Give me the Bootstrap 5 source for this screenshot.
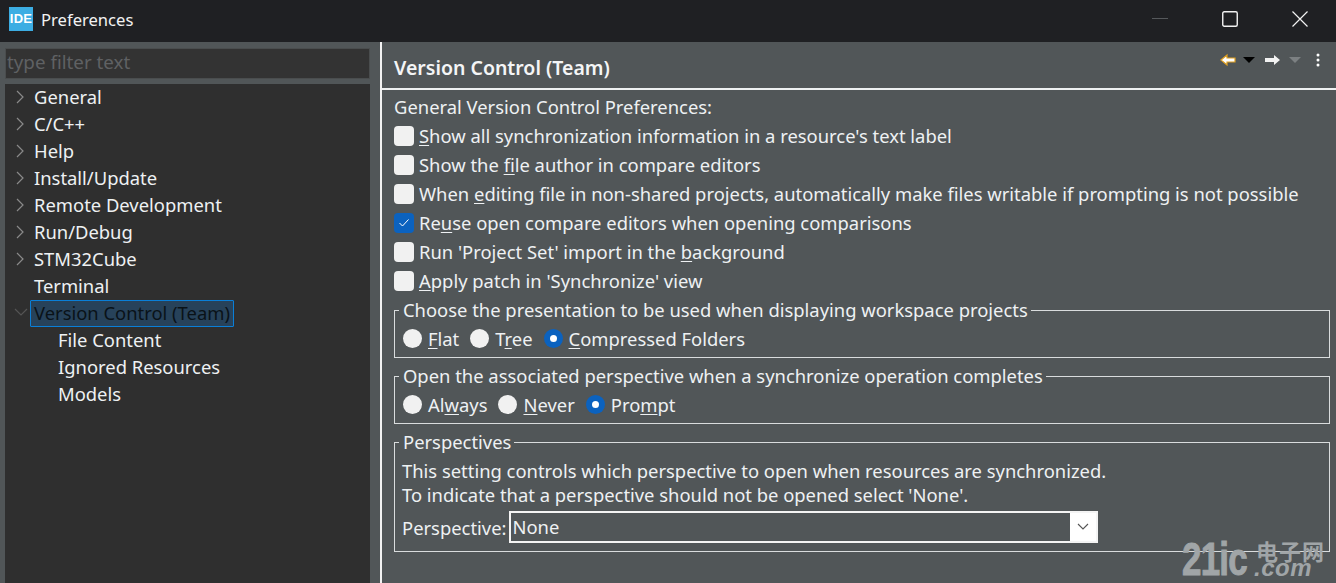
<!DOCTYPE html>
<html lang="en">
<head>
<meta charset="utf-8">
<title>Preferences</title>
<link rel="stylesheet" href="https://cdn.jsdelivr.net/npm/bootstrap@5.3.0/dist/css/bootstrap.min.css">
<style>
html,body{height:583px;overflow:hidden;background:#515658;}
body{font-family:"Noto Sans","Open Sans",sans-serif;font-size:18.4px;line-height:25px;color:#eef1f3;position:relative;}
u{text-underline-offset:2px;text-decoration-thickness:1px;}
.titlebar{height:42px;background:#1f2023;padding:0 0 4px 9px;gap:8px;}
.logo-box{width:24px;height:24px;background:#3cade3;color:#fff;font:bold 13px/24px "Liberation Sans",sans-serif;text-align:center;letter-spacing:.2px;}
.title-text{font-size:16.6px;color:#f2f2f2;}
.winbtns{margin-left:auto;margin-right:1px;}
.winbtn{width:70px;height:38px;}
.mainrow{height:541px;}
.leftpane{width:381px;padding:7px 10px 0 5px;flex:none;border-right:1px solid transparent;}
.filterbox{height:31px;background:#333;border:1px solid #4a4d4e;color:#5f6163;padding:0 1px;line-height:26px;font-size:18.8px;margin-top:-1px;}
.treebox{background:#2f2f2f;margin-top:5px;height:499px;color:#eef1f3;}
.treerow{height:27px;line-height:25px;position:relative;padding-left:29px;white-space:nowrap;}
.treerow.lvl2{padding-left:53px;}
.treerow svg{position:absolute;left:9px;top:6px;}
.sel-label{display:inline-block;background:#27425a;border:1px solid #0a7fd8;border-radius:1px;color:#0a1218;line-height:23px;height:27px;padding:0 3px;margin-left:-4px;vertical-align:top;}
.vline{width:2px;background:#f2f2f2;flex:none;margin-left:-1px;}
.rightpane{flex:1;min-width:0;}
.headbar{height:48px;border-bottom:2px solid #eef0f1;position:relative;padding:13px 0 0 12px;font-weight:600;font-size:19.5px;line-height:26px;color:#f4f5f6;}
.toolicons{position:absolute;right:16px;top:11px;gap:0;}
.prefbody{padding:4px 6px 0 12px;}
.checkrow{height:29px;gap:5px;white-space:nowrap;}
.ckbox{width:20px;height:20px;background:#f1f1f1;border-radius:4px;flex:none;}
.ckbox.onbox{background:#0b62bf;}
.groupframe{border:1px solid #d9dcdd;margin:0;padding:0 8px;position:relative;}
.group-one{height:48px;margin-top:15px;}
.group-two{height:48px;margin-top:18px;}
.group-three{height:110px;margin-top:18px;padding-left:7px;}
.grouptitle{position:absolute;left:4px;top:-14px;background:#515658;padding:0 3px 0 4px;line-height:25px;height:25px;white-space:nowrap;}
.radiorow{padding-top:15px;gap:10px;white-space:nowrap;}
.radiowrap{gap:6px;margin-right:1px;}
.rdo{width:19px;height:19px;border-radius:50%;background:#f1f1f1;flex:none;}
.rdo.ondot{background:#0b62bf;position:relative;}
.rdo.ondot::after{content:"";position:absolute;left:6px;top:6px;width:7px;height:7px;border-radius:50%;background:#fff;}
.textlines{padding-top:16px;line-height:24px;white-space:nowrap;}
.persprow{margin-top:4px;gap:3px;}
.comboshell{width:589px;height:32px;border:2px solid #f4f4f4;display:flex;background:#515658;}
.combotext{flex:1;padding-left:1px;line-height:28px;}
.comboarrow{width:26px;background:#fff;display:flex;align-items:center;justify-content:center;}
.watermark{position:absolute;left:1182px;top:537px;width:150px;height:44px;color:#a0a5a7;pointer-events:none;}
.wm-big{position:absolute;left:0;top:2px;font:bold 46px/40px "Liberation Sans",sans-serif;letter-spacing:-1px;transform:scaleX(.76);transform-origin:left top;-webkit-text-stroke:1px #a0a5a7;}
.wm-cn{position:absolute;left:74px;top:3px;font:bold 22px/20px "Noto Sans CJK SC",sans-serif;letter-spacing:1px;}
.wm-com{position:absolute;left:72px;top:23px;font:italic bold 24px/16px "Liberation Sans",sans-serif;letter-spacing:.5px;}
</style>
</head>
<body>
<div class="titlebar d-flex align-items-center">
  <div class="logo-box">IDE</div>
  <div class="title-text">Preferences</div>
  <div class="winbtns d-flex">
    <div class="winbtn d-flex align-items-center justify-content-center"><svg width="16" height="2" viewBox="0 0 16 2"><rect width="16" height="1" y="0" fill="#55585b"/></svg></div>
    <div class="winbtn d-flex align-items-center justify-content-center"><svg width="16" height="16" viewBox="0 0 16 16"><rect x=".75" y=".75" width="14.5" height="14.5" rx="1.5" fill="none" stroke="#f2f2f2" stroke-width="1.4"/></svg></div>
    <div class="winbtn d-flex align-items-center justify-content-center"><svg width="16" height="16" viewBox="0 0 16 16"><path d="M.5.5l15 15M15.5.5l-15 15" stroke="#f2f2f2" stroke-width="1.2" fill="none"/></svg></div>
  </div>
</div>
<div class="mainrow d-flex">
  <div class="leftpane">
    <div class="filterbox">type filter text</div>
    <div class="treebox">
      <div class="treerow"><svg width="12" height="14" viewBox="0 0 12 14"><path d="M3 1l6 6-6 6" fill="none" stroke="#8a8a8a" stroke-width="1.2"/></svg>General</div>
      <div class="treerow"><svg width="12" height="14" viewBox="0 0 12 14"><path d="M3 1l6 6-6 6" fill="none" stroke="#8a8a8a" stroke-width="1.2"/></svg>C/C++</div>
      <div class="treerow"><svg width="12" height="14" viewBox="0 0 12 14"><path d="M3 1l6 6-6 6" fill="none" stroke="#8a8a8a" stroke-width="1.2"/></svg>Help</div>
      <div class="treerow"><svg width="12" height="14" viewBox="0 0 12 14"><path d="M3 1l6 6-6 6" fill="none" stroke="#8a8a8a" stroke-width="1.2"/></svg>Install/Update</div>
      <div class="treerow"><svg width="12" height="14" viewBox="0 0 12 14"><path d="M3 1l6 6-6 6" fill="none" stroke="#8a8a8a" stroke-width="1.2"/></svg>Remote Development</div>
      <div class="treerow"><svg width="12" height="14" viewBox="0 0 12 14"><path d="M3 1l6 6-6 6" fill="none" stroke="#8a8a8a" stroke-width="1.2"/></svg>Run/Debug</div>
      <div class="treerow"><svg width="12" height="14" viewBox="0 0 12 14"><path d="M3 1l6 6-6 6" fill="none" stroke="#8a8a8a" stroke-width="1.2"/></svg>STM32Cube</div>
      <div class="treerow">Terminal</div>
      <div class="treerow"><svg width="14" height="12" viewBox="0 0 14 12"><path d="M1 3l6 6 6-6" fill="none" stroke="#555" stroke-width="1.2"/></svg><span class="sel-label">Version Control (Team)</span></div>
      <div class="treerow lvl2">File Content</div>
      <div class="treerow lvl2">Ignored Resources</div>
      <div class="treerow lvl2">Models</div>
    </div>
  </div>
  <div class="vline"></div>
  <div class="rightpane">
    <div class="headbar">Version Control (Team)
      <div class="toolicons d-flex align-items-center">
        <svg width="17" height="14" viewBox="0 0 17 14"><path d="M1 7l6-5v3h8v4H7v3z" fill="#fff" stroke="#e0a020" stroke-width="1.2"/></svg>
        <svg width="12" height="8" viewBox="0 0 12 8" style="margin-left:6px"><path d="M0 1h12L6 7z" fill="#000"/></svg>
        <svg width="17" height="14" viewBox="0 0 17 14" style="margin-left:9px"><path d="M16 7l-6-5v3H1v4h9v3z" fill="#f2f2f2"/></svg>
        <svg width="12" height="8" viewBox="0 0 12 8" style="margin-left:8px"><path d="M0 1h12L6 7z" fill="#7c8082"/></svg>
        <svg width="4" height="14" viewBox="0 0 4 14" style="margin-left:15px"><circle cx="2" cy="2" r="1.5" fill="#fff"/><circle cx="2" cy="7" r="1.5" fill="#fff"/><circle cx="2" cy="12" r="1.5" fill="#fff"/></svg>
      </div>
    </div>
    <div class="prefbody">
      <div style="height:27px;line-height:25px;">General Version Control Preferences:</div>
      <div class="checkrow d-flex align-items-center"><span class="ckbox"></span><span><u>S</u>how all synchronization information in a resource's text label</span></div>
      <div class="checkrow d-flex align-items-center"><span class="ckbox"></span><span>Show the <u>f</u>ile author in compare editors</span></div>
      <div class="checkrow d-flex align-items-center"><span class="ckbox"></span><span>When <u>e</u>diting file in non-shared projects, automatically make files writable if prompting is not possible</span></div>
      <div class="checkrow d-flex align-items-center"><span class="ckbox onbox d-flex align-items-center justify-content-center"><svg width="12" height="10" viewBox="0 0 12 10"><path d="M1.5 5l3 3 6-6.5" fill="none" stroke="#fff" stroke-width="1"/></svg></span><span>Re<u>u</u>se open compare editors when opening comparisons</span></div>
      <div class="checkrow d-flex align-items-center"><span class="ckbox"></span><span>Run 'Project Set' import in the <u>b</u>ackground</span></div>
      <div class="checkrow d-flex align-items-center"><span class="ckbox"></span><span><u>A</u>pply patch in 'Synchronize' view</span></div>
      <div class="groupframe group-one">
        <div class="grouptitle">Choose the presentation to be used when displaying workspace projects</div>
        <div class="radiorow d-flex align-items-center">
          <span class="radiowrap d-flex align-items-center"><span class="rdo"></span><span><u>F</u>lat</span></span>
          <span class="radiowrap d-flex align-items-center"><span class="rdo"></span><span>T<u>r</u>ee</span></span>
          <span class="radiowrap d-flex align-items-center"><span class="rdo ondot"></span><span><u>C</u>ompressed Folders</span></span>
        </div>
      </div>
      <div class="groupframe group-two">
        <div class="grouptitle">Open the associated perspective when a synchronize operation completes</div>
        <div class="radiorow d-flex align-items-center">
          <span class="radiowrap d-flex align-items-center"><span class="rdo"></span><span>Al<u>w</u>ays</span></span>
          <span class="radiowrap d-flex align-items-center"><span class="rdo"></span><span><u>N</u>ever</span></span>
          <span class="radiowrap d-flex align-items-center"><span class="rdo ondot"></span><span>Pro<u>m</u>pt</span></span>
        </div>
      </div>
      <div class="groupframe group-three">
        <div class="grouptitle">Perspectives</div>
        <div class="textlines">This setting controls which perspective to open when resources are synchronized.<br>To indicate that a perspective should not be opened select 'None'.</div>
        <div class="persprow d-flex align-items-center">
          <span>Perspective:</span>
          <div class="comboshell"><div class="combotext">None</div><div class="comboarrow"><svg width="12" height="8" viewBox="0 0 12 8"><path d="M1 1l5 5 5-5" fill="none" stroke="#555" stroke-width="1.1"/></svg></div></div>
        </div>
      </div>
    </div>
  </div>
</div>
<div class="watermark">
  <span class="wm-big">21ic</span>
  <span class="wm-cn">电子网</span>
  <span class="wm-com">.com</span>
</div>
</body>
</html>
